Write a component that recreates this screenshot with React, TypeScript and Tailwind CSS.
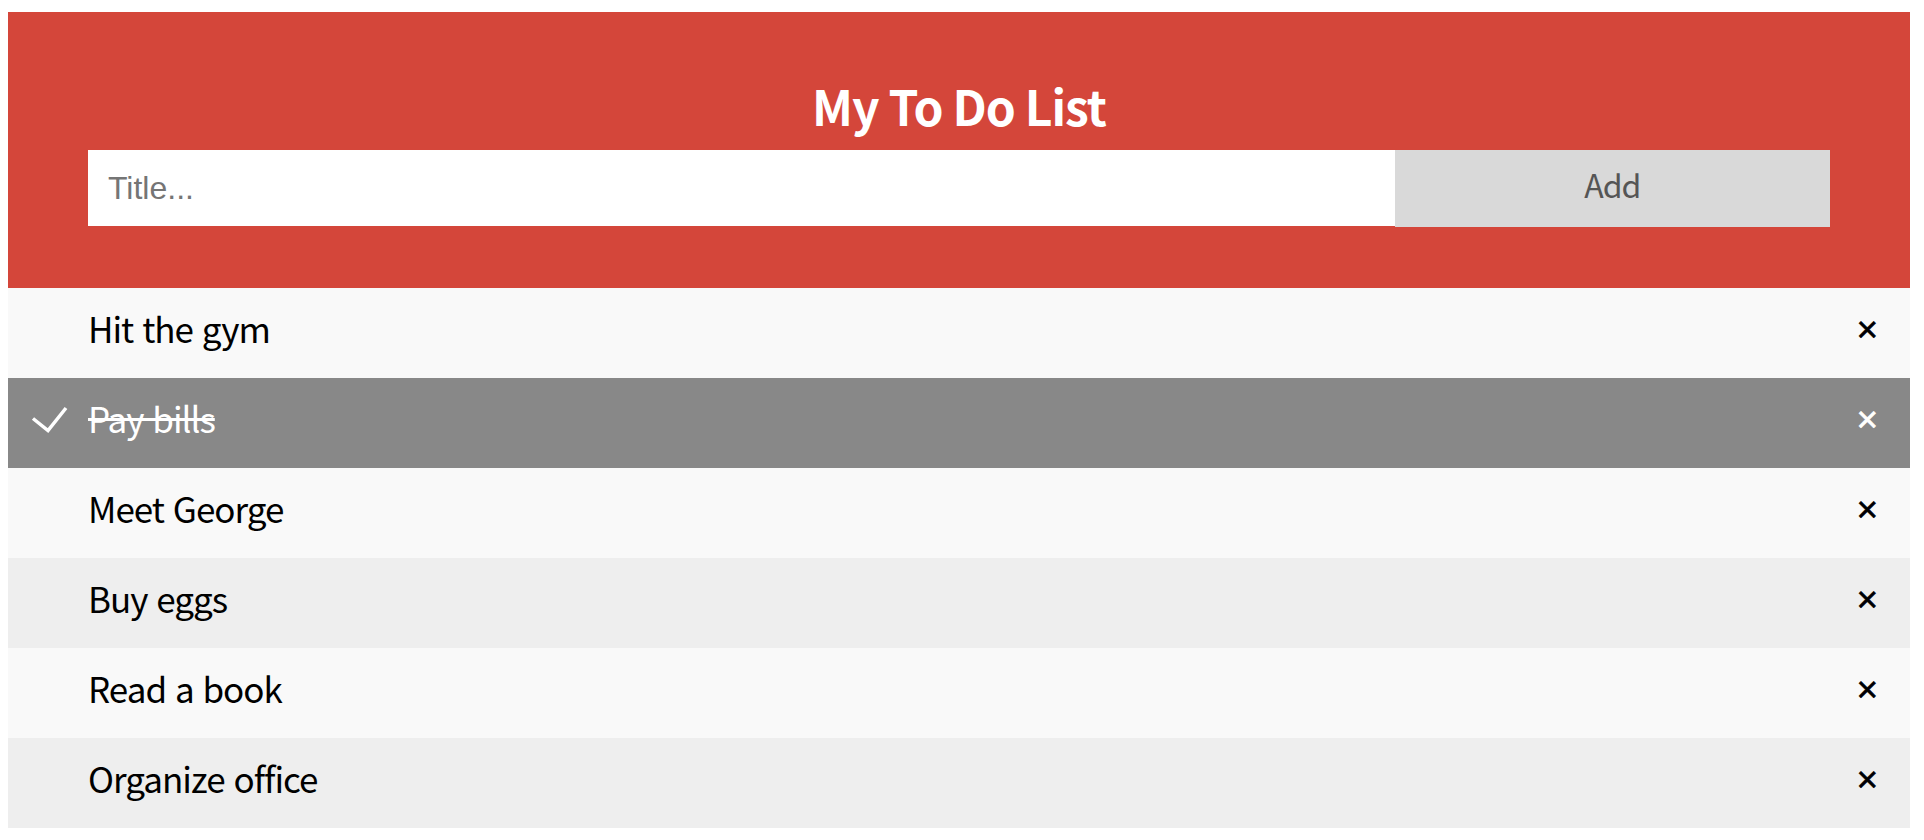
import { useState } from 'react';

type Todo = { id: number; title: string; done: boolean };

const initial: Todo[] = [
  { id: 1, title: 'Hit the gym', done: false },
  { id: 2, title: 'Pay bills', done: true },
  { id: 3, title: 'Meet George', done: false },
  { id: 4, title: 'Buy eggs', done: false },
  { id: 5, title: 'Read a book', done: false },
  { id: 6, title: 'Organize office', done: false },
];

export default function App() {
  const [todos, setTodos] = useState<Todo[]>(initial);
  const [title, setTitle] = useState('');

  const add = () => {
    if (!title.trim()) return;
    setTodos([...todos, { id: Date.now(), title: title.trim(), done: false }]);
    setTitle('');
  };

  return (
    <div className="ml-2 mr-[14px] mt-3 font-['Noto_Sans_CJK_KR','Noto_Sans',sans-serif]">
      {/* header */}
      <div className="bg-[#d4463a] px-20 pt-[60px] pb-[61px] text-center text-white">
        <h2 className="m-[10px] h-[58px] pb-[12px] text-[48px] font-bold leading-[46px] tracking-[-1px]">
          My To Do List
        </h2>
        <div className="flex">
          <input
            value={title}
            onChange={e => setTitle(e.target.value)}
            placeholder="Title..."
            className="h-[76px] w-3/4 bg-white p-5 font-['Liberation_Sans',Arial,sans-serif] text-[32px] leading-[36px] text-black outline-none placeholder:text-[#757575]"
          />
          <span
            onClick={add}
            className="h-[77px] w-1/4 cursor-pointer bg-[#d9d9d9] px-5 pt-[14px] text-center text-[32px] leading-[40px] tracking-[-1px] text-[#555]"
          >
            Add
          </span>
        </div>
      </div>

      {/* list */}
      <ul>
        {todos.map((t, i) => (
          <li
            key={t.id}
            onClick={() => setTodos(todos.map(x => (x.id === t.id ? { ...x, done: !x.done } : x)))}
            className={
              'relative h-[90px] cursor-pointer pt-[19px] pl-20 pr-4 text-[35px] leading-[42px] tracking-[-1px] [word-spacing:2px] ' +
              (t.done
                ? 'bg-[#888] text-white line-through'
                : i % 2 === 0
                  ? 'bg-[#f9f9f9] text-black'
                  : 'bg-[#eee] text-black')
            }
          >
            {t.done && (
              <svg
                className="absolute left-[23px] top-[28px]"
                width="37"
                height="27"
                viewBox="0 0 37 27"
                fill="none"
                stroke="white"
                strokeWidth="3.5"
              >
                <polyline points="2,12.5 17,24.5 35,2" />
              </svg>
            )}
            {t.title}
            <span
              onClick={e => {
                e.stopPropagation();
                setTodos(todos.filter(x => x.id !== t.id));
              }}
              className={
                "absolute right-0 top-0 px-8 pt-[21px] font-['Liberation_Sans',Arial,sans-serif] text-[37px] leading-[42px] tracking-normal no-underline [-webkit-text-stroke:0.6px] " +
                (t.done ? 'text-white' : 'text-black')
              }
            >
              {'\u00D7'}
            </span>
          </li>
        ))}
      </ul>
    </div>
  );
}
